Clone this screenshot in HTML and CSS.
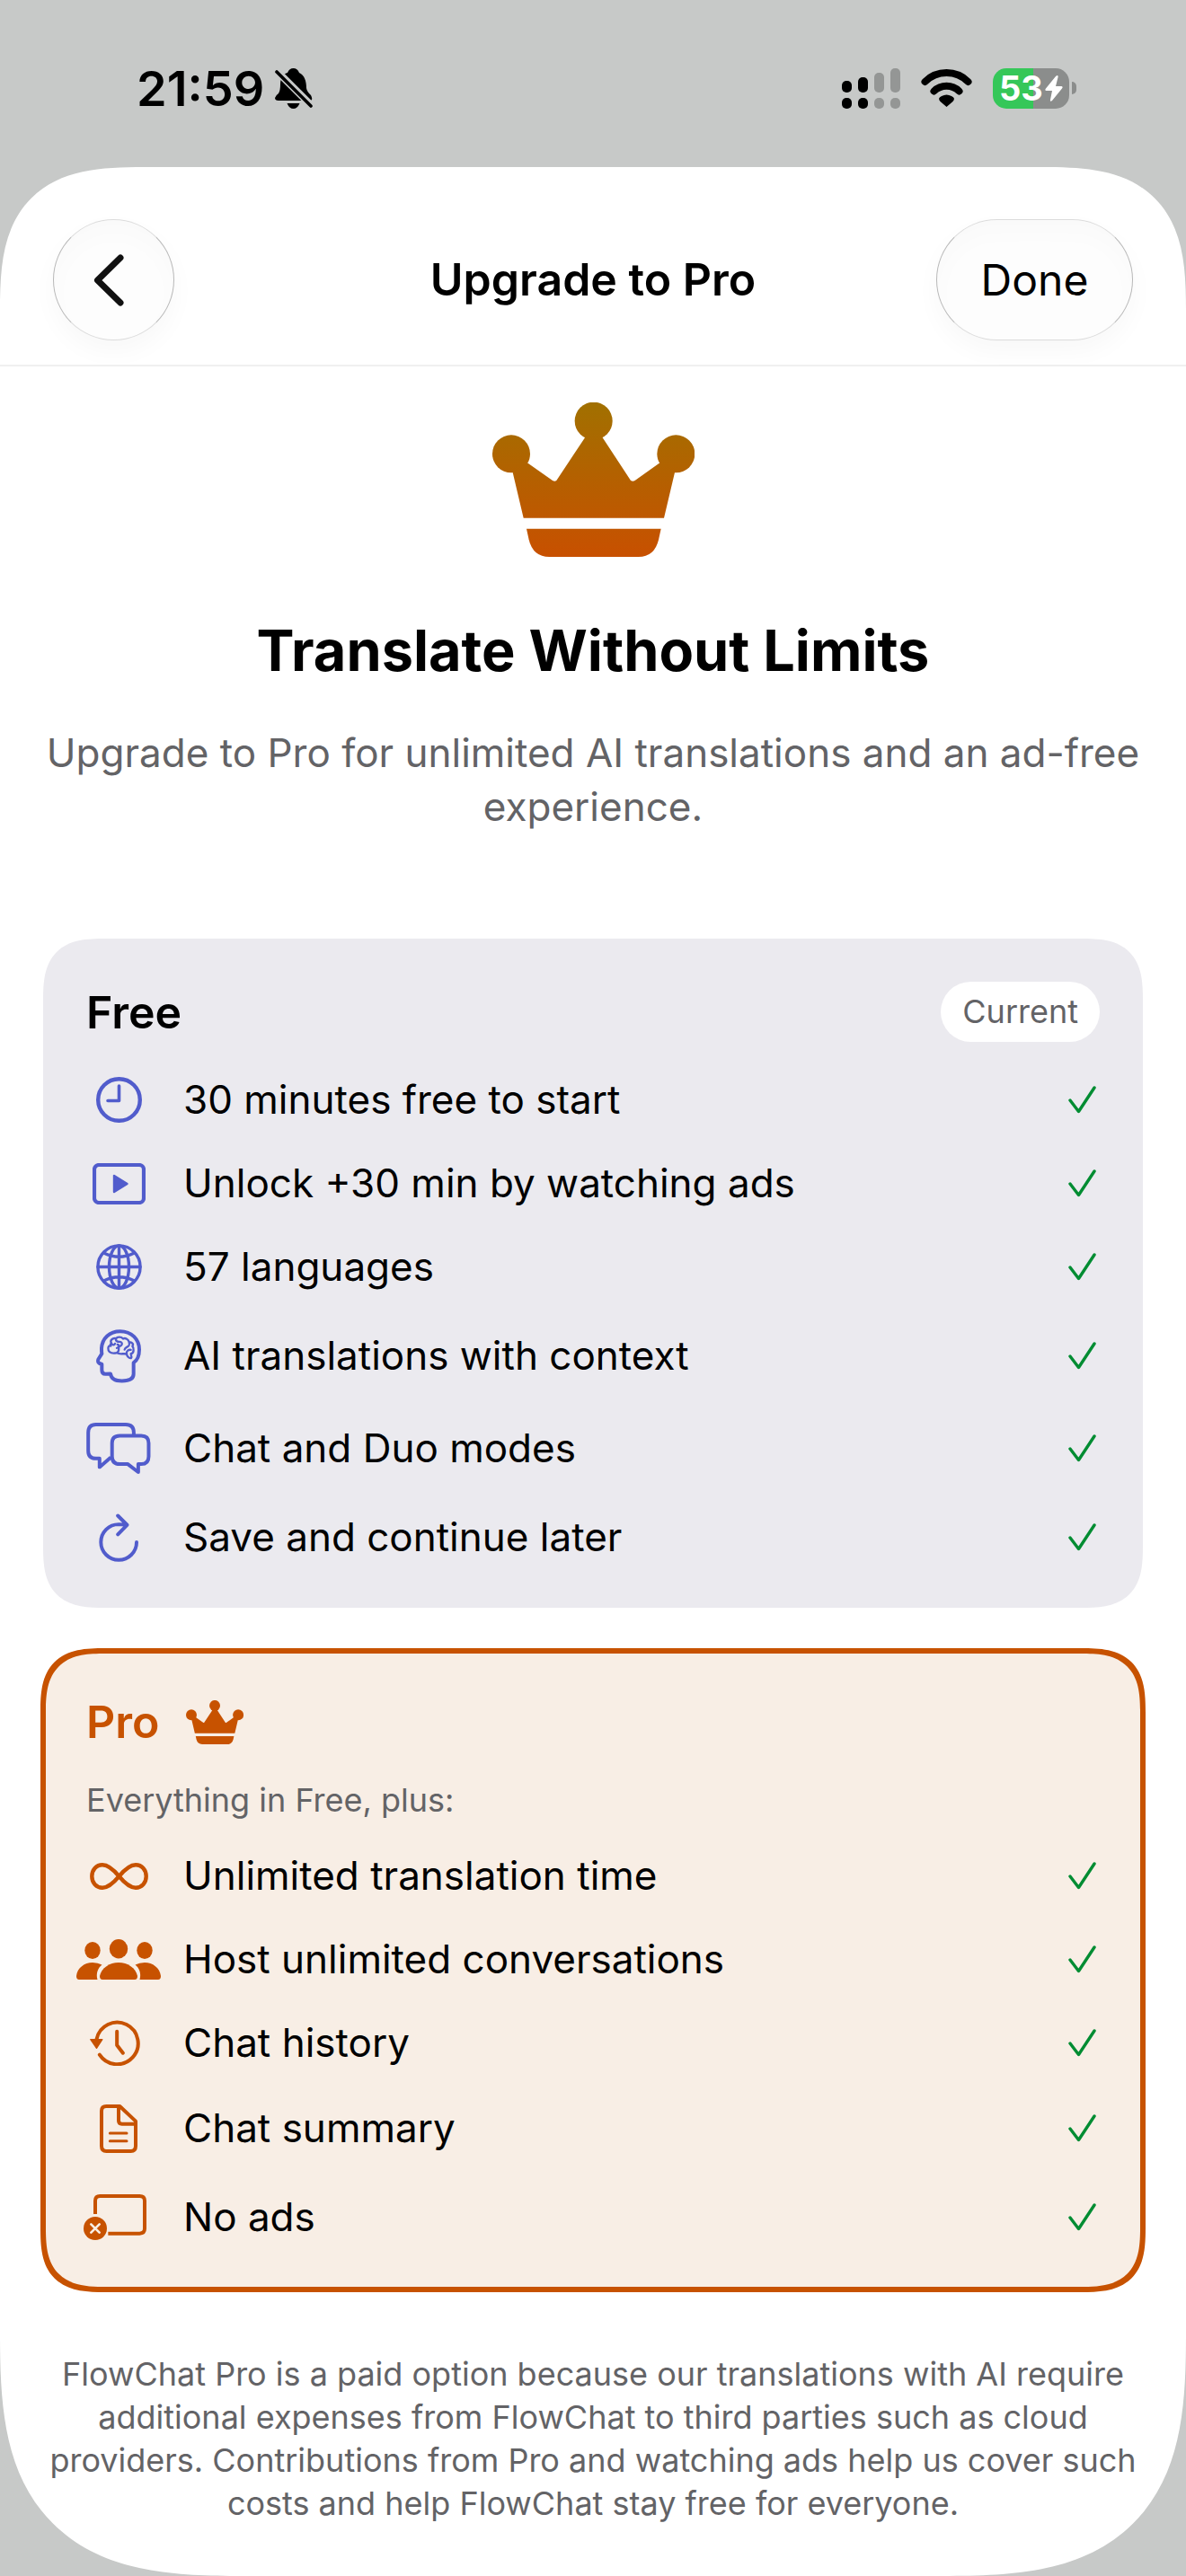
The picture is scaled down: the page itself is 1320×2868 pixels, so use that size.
FILE: index.html
```html
<!DOCTYPE html>
<html lang="en">
<head>
<meta charset="utf-8">
<meta name="viewport" content="width=device-width, initial-scale=1">
<title>Upgrade to Pro</title>
<link rel="stylesheet" href="styles.css">
</head>
<body>
<svg class="defs" width="0" height="0" aria-hidden="true">
  <defs>
    <linearGradient id="gold" gradientUnits="userSpaceOnUse" x1="0" y1="84" x2="0" y2="600">
      <stop offset="0" stop-color="#a17000"/>
      <stop offset="1" stop-color="#c85000"/>
    </linearGradient>
    <symbol id="crown" viewBox="141 84 675 516">
      <circle cx="204" cy="256" r="63"/>
      <circle cx="479" cy="146" r="63"/>
      <circle cx="754" cy="256" r="63"/>
      <path d="M209 318L204 256L260 287L342 345Q349 350 355 345L449 203L479 146L510 203L603 345Q610 350 617 345L698 287L754 256L750 318L714 470H245Z"/>
      <path d="M255 506H704L696 543Q682 600 629 600H331Q277 600 263 543Z"/>
    </symbol>
    <symbol id="check" viewBox="0 0 31 31">
      <path d="M2 16L11.5 28.5L29 2" fill="none" stroke="currentColor" stroke-width="3.4" stroke-linecap="round" stroke-linejoin="round"/>
    </symbol>
  </defs>
</svg>

<div class="status">
  <div class="status-left">
    <span class="time">21:59</span>
    <svg width="42" height="45" viewBox="0 0 42 45" role="img" aria-label="Silent">
      <path d="M20.500 0Q25 0 27 5C33 8 35 14 35 22Q35.500 26 40 30Q43 36 39 36H4Q0 36 0 33Q1 30 4 28Q6 25 6 18C6 10 10 6 14 5Q16 0 20.500 0Z"/>
      <path d="M13.500 39H27.500Q25 45 20.500 45Q16 45 13.500 39Z"/>
      <path d="M0 1L43 44" stroke="#c7c9c8" stroke-width="8"/>
      <path d="M2 4L40 42" stroke="#000" stroke-width="3.600" stroke-linecap="round"/>
    </svg>
  </div>
  <div class="status-right">
    <svg width="65" height="45" viewBox="0 0 65 45" role="img" aria-label="Signal">
      <rect x="0" y="14" width="11" height="13" rx="5"/>
      <rect x="18" y="10" width="11" height="17" rx="5"/>
      <rect x="0" y="33" width="11" height="12" rx="5"/>
      <rect x="18" y="33" width="11" height="12" rx="5"/>
      <g fill="#949695">
        <rect x="36" y="5" width="11" height="22" rx="5"/>
        <rect x="54" y="0" width="11" height="27" rx="5"/>
        <rect x="36" y="33" width="11" height="12" rx="5"/>
        <rect x="54" y="33" width="11" height="12" rx="5"/>
      </g>
    </svg>
    <svg width="57" height="42" viewBox="0 0 57 42" role="img" aria-label="Wi-Fi">
      <path d="M4.500 14A34 34 0 0 1 52.500 14" fill="none" stroke="#000" stroke-width="8" stroke-linecap="round"/>
      <path d="M14.500 24.500A20 20 0 0 1 42.500 24.500" fill="none" stroke="#000" stroke-width="8" stroke-linecap="round"/>
      <path d="M28.500 42L21.500 36Q18 32 23 30Q28.500 27 34 30Q39 32 35.500 36Z"/>
    </svg>
    <div class="battery">
      <div class="battery-body">
        <span>53</span>
        <svg width="20" height="29" viewBox="0 0 20 29" aria-hidden="true"><path fill="#fff" d="M13.500 0Q15 0 14.500 2L12 12H18.500Q20.500 12.500 19 14.500L8 28Q5.500 30 6 27L8 17H1.500Q-.500 16.500 1 14.500L12 1Z"/></svg>
      </div>
      <div class="battery-tip"></div>
    </div>
  </div>
</div>

<main class="sheet">
  <header class="bar">
    <button class="glass back" type="button" aria-label="Back">
      <svg width="34" height="58" viewBox="0 0 34 58"><path d="M30 4L4.500 29L30 54" fill="none" stroke="#111" stroke-width="7" stroke-linecap="round" stroke-linejoin="round"/></svg>
    </button>
    <h1 class="bar-title">Upgrade to Pro</h1>
    <button class="glass done" type="button">Done</button>
  </header>

  <div class="content">
    <section class="hero">
      <svg class="hero-crown" width="225" height="172" aria-hidden="true"><use href="#crown"/></svg>
      <h2 class="hero-title">Translate Without Limits</h2>
      <p class="hero-text">Upgrade to Pro for unlimited AI translations and an ad-free experience.</p>
    </section>

    <section class="card free">
      <div class="card-head">
        <h3 class="card-title">Free</h3>
        <span class="badge">Current</span>
      </div>
      <ul class="features">
        <li class="row">
          <span class="icon"><svg width="51" height="51" viewBox="0 0 51 51"><circle cx="25.500" cy="25.500" r="23.300" stroke-width="4.400"/><path d="M25.500 10V26.500H13" stroke-width="3.600"/></svg></span>
          <span class="label">30 minutes free to start</span>
          <svg class="check" width="31" height="31"><use href="#check"/></svg>
        </li>
        <li class="row">
          <span class="icon"><svg width="59" height="46" viewBox="0 0 59 46"><rect x="2" y="2" width="55" height="42" rx="5" stroke-width="4.200"/><path d="M24 14V32L38.500 23Z" fill="currentColor" stroke-width="2.400"/></svg></span>
          <span class="label">Unlock +30 min by watching ads</span>
          <svg class="check" width="31" height="31"><use href="#check"/></svg>
        </li>
        <li class="row">
          <span class="icon"><svg width="51" height="51" viewBox="0 0 51 51" stroke-width="3.400"><circle cx="25.500" cy="25.500" r="23.600"/><ellipse cx="25.500" cy="25.500" rx="11" ry="23.600"/><path d="M25.500 2V49M2 25.500H49M8.500 10Q25.500 18.500 42.500 10M8.500 41Q25.500 32.500 42.500 41"/></svg></span>
          <span class="label">57 languages</span>
          <svg class="check" width="31" height="31"><use href="#check"/></svg>
        </li>
        <li class="row tall-3">
          <span class="icon"><svg width="50" height="60" viewBox="201 151 150 179">
            <path stroke-width="12" d="M249 299L232 300Q220 300 220 286V267Q204 264 208 251L220 232Q219 226 219 214C221 180 246 157 281 157C320 157 345 185 345 218C345 238 337 255 326 262V300Q326 323 287 323Q252 323 249 299Z"/>
            <path stroke-width="7" d="M250 206C238 203 240 222 246 226C252 231 262 231 270 229C280 236 292 230 303 233C304 240 310 248 317 247C322 244 317 238 317 232C328 231 328 212 322 207C328 198 318 192 311 194C310 184 298 178 291 182C284 174 271 176 268 181C255 178 246 188 252 197C247 200 248 204 250 206M252 197C257 206 263 203 264 198M268 181C264 190 274 193 280 192M272 201C281 201 274 213 270 213M280 192C292 194 288 206 277 208M277 208C275 218 280 224 270 229M311 194C316 212 299 206 296 218M303 233C301 222 310 218 317 219"/>
          </svg></span>
          <span class="label">AI translations with context</span>
          <svg class="check" width="31" height="31"><use href="#check"/></svg>
        </li>
        <li class="row tall-2">
          <span class="icon"><svg width="72" height="57" viewBox="168 461 216 172" stroke-width="12">
            <path stroke-linecap="butt" d="M327 500V494Q327 467 300 467H200Q174 467 174 494V555Q174 581 200 581H212V610L250 577"/>
            <path d="M280 505H352Q377 505 377 530V574Q377 600 352 600H342V627L307 600H280Q254 600 254 574V530Q254 505 280 505Z"/>
          </svg></span>
          <span class="label">Chat and Duo modes</span>
          <svg class="check" width="31" height="31"><use href="#check"/></svg>
        </li>
        <li class="row tall-1">
          <span class="icon"><svg width="44" height="54" viewBox="209 765 133 162" stroke-width="12"><path d="M336 861A60 60 0 1 1 276 801L303 803M273 772L304 803L273 835"/></svg></span>
          <span class="label">Save and continue later</span>
          <svg class="check" width="31" height="31"><use href="#check"/></svg>
        </li>
      </ul>
    </section>

    <section class="card pro">
      <div class="card-head">
        <h3 class="card-title">Pro</h3>
        <svg class="small-crown" width="64" height="49" aria-hidden="true"><use href="#crown"/></svg>
      </div>
      <p class="note">Everything in Free, plus:</p>
      <ul class="features">
        <li class="row">
          <span class="icon"><svg width="65" height="30" viewBox="0 0 65 30"><path stroke-width="4.400" d="M32.500 15C25 6 20 2.300 14 2.300C7 2.300 2.300 8 2.300 15S7 27.700 14 27.700C20 27.700 25 24 32.500 15C40 6 45 2.300 51 2.300C58 2.300 62.700 8 62.700 15S58 27.700 51 27.700C45 27.700 40 24 32.500 15Z"/></svg></span>
          <span class="label">Unlimited translation time</span>
          <svg class="check" width="31" height="31"><use href="#check"/></svg>
        </li>
        <li class="row">
          <span class="icon"><svg class="solid" width="94" height="45" viewBox="0 0 94 45">
            <ellipse cx="18" cy="12.500" rx="8.700" ry="9.500"/><ellipse cx="47" cy="10.700" rx="10.200" ry="10.700"/><ellipse cx="76" cy="12.500" rx="8.700" ry="9.500"/>
            <path d="M3 45Q0 45 0 41C1 32 9 26 18 26Q24 26 28.500 28.500C24 32 21.500 38 23.500 45Z"/>
            <path d="M91 45Q94 45 94 41C93 32 85 26 76 26Q70 26 65.500 28.500C70 32 72.500 38 70.500 45Z"/>
            <path d="M29 45Q26 45 26 41C28 32 37 26 47 26C57 26 66 32 68 41Q68 45 65 45Z"/>
          </svg></span>
          <span class="label">Host unlimited conversations</span>
          <svg class="check" width="31" height="31"><use href="#check"/></svg>
        </li>
        <li class="row">
          <span class="icon wide-left"><svg width="56" height="51" viewBox="185 150 167 153"><path stroke-width="12" d="M207 214A70 70 0 1 1 217 266"/><path stroke-width="12" d="M275 188V234L295 260"/><path stroke-width="4" fill="currentColor" d="M187 215H226L207 244Z"/></svg></span>
          <span class="label">Chat history</span>
          <svg class="check" width="31" height="31"><use href="#check"/></svg>
        </li>
        <li class="row tall-1">
          <span class="icon"><svg width="42" height="54" viewBox="213 436 126 162"><path stroke-width="12" d="M235 442H280L333 492V575Q333 592 317 592H235Q219 592 219 575V458Q219 442 235 442ZM276 446V490Q276 501 287 501H330"/><path stroke-width="9" d="M247 532H303M247 558H303"/></svg></span>
          <span class="label">Chat summary</span>
          <svg class="check" width="31" height="31"><use href="#check"/></svg>
        </li>
        <li class="row tall-2">
          <span class="icon wide-left"><svg width="70" height="51" viewBox="156 729 210 153"><path stroke-width="12" stroke-linecap="butt" d="M195 795V751Q195 735 211 735H343Q360 735 360 751V844Q360 860 343 860H238"/><circle cx="195" cy="843" r="39" fill="currentColor" stroke="none"/><path stroke="#f8eee5" stroke-width="8" d="M181 829L209 857M209 829L181 857"/></svg></span>
          <span class="label">No ads</span>
          <svg class="check" width="31" height="31"><use href="#check"/></svg>
        </li>
      </ul>
    </section>

    <p class="disclaimer">FlowChat Pro is a paid option because our translations with AI require additional expenses from FlowChat to third parties such as cloud providers. Contributions from Pro and watching ads help us cover such costs and help FlowChat stay free for everyone.</p>
  </div>
</main>
</body>
</html>
```

FILE: styles.css
```css
* {
  box-sizing: border-box;
}

body {
  margin: 0;
  min-height: 100vh;
  display: flex;
  flex-direction: column;
  background: #c7c9c8;
  color: #000;
  font-family: Inter, "Liberation Sans", sans-serif;
  font-size: 44px;
  line-height: 57px;
}

h1, h2, h3, p, ul {
  margin: 0;
  padding: 0;
}

/* Shared symbols: kept out of the flow, yet rendered so the gradient works */
.defs {
  position: absolute;
}

/* Status bar */
.status {
  display: flex;
  justify-content: space-between;
  padding: 62px 122px 52px 152px;
}

.status-left,
.status-right {
  display: flex;
  align-items: center;
  height: 72px;
}

.status-left {
  gap: 12px;
}

.status-right {
  gap: 23px;
}

.time {
  font-size: 54px;
  font-weight: 600;
}

.battery {
  display: flex;
  align-items: center;
  gap: 3px;
}

.battery-body {
  display: flex;
  align-items: center;
  justify-content: center;
  gap: 2px;
  width: 85px;
  height: 45px;
  border-radius: 15px;
  background: linear-gradient(to right, #35c759 53%, #8b8d8c 53%);
  color: #fff;
  font-size: 38px;
  font-weight: 700;
  line-height: 45px;
}

.battery-tip {
  width: 5px;
  height: 14px;
  border-radius: 0 5px 5px 0;
  background: #8b8d8c;
}

/* Sheet */
.sheet {
  flex: 1;
  background: #fff;
  border-radius: 120px 120px 188px 188px;
}

.bar {
  display: grid;
  grid-template-columns: 1fr auto 1fr;
  align-items: center;
  padding: 58px 59px 27px;
  border-bottom: 2px solid #f0f0f0;
}

.bar-title {
  font-size: 50px;
  font-weight: 600;
}

.glass {
  display: flex;
  align-items: center;
  justify-content: center;
  height: 135px;
  padding: 0;
  border: 1px solid #b8b8b8;
  border-top-color: #dcdcdc;
  border-bottom-color: #dcdcdc;
  border-radius: 68px;
  background: #fdfdfd;
  box-shadow: 0 12px 28px rgba(0, 0, 0, 0.03), inset 0 14px 28px rgba(0, 0, 0, 0.015);
  color: #000;
  font: inherit;
  font-size: 48px;
}

.back {
  width: 135px;
  padding-right: 11px;
}

.done {
  justify-self: end;
  width: 219px;
}

.content {
  padding: 40px 48px 44px;
}

/* Hero */
.hero {
  display: flex;
  flex-direction: column;
  align-items: center;
  margin-bottom: 117px;
  text-align: center;
}

.hero-crown {
  fill: url(#gold);
}

.hero-title {
  margin: 64px 0 44px;
  font-size: 63px;
  font-weight: 700;
  line-height: 80px;
}

.hero-text {
  color: #636366;
  line-height: 60px;
}

/* Plan cards */
.card {
  display: flex;
  flex-direction: column;
  gap: 36px;
  padding: 48px;
  border-radius: 54px;
}

.free {
  background: #ebeaef;
}

.pro {
  margin-top: 48px;
  background: #f8eee5;
  outline: 6px solid #c75200;
  outline-offset: -3px;
}

.card-head {
  display: flex;
  align-items: center;
}

.free .card-head {
  justify-content: space-between;
}

.pro .card-head {
  gap: 30px;
  color: #c75200;
}

.card-title {
  font-size: 50px;
  font-weight: 600;
  line-height: 62px;
}

.small-crown {
  fill: currentColor;
}

.badge {
  padding: 0 24px;
  border-radius: 34px;
  background: #fff;
  color: #636366;
  font-size: 36px;
  line-height: 67px;
}

.note {
  color: #636366;
  font-size: 36px;
  line-height: 40px;
}

.features {
  display: flex;
  flex-direction: column;
  gap: 36px;
  list-style: none;
}

.row {
  display: flex;
  align-items: center;
  gap: 36px;
  min-height: 57px;
}

.tall-1 {
  min-height: 61px;
}

.tall-2 {
  min-height: 65px;
}

.tall-3 {
  min-height: 69px;
}

.icon {
  display: flex;
  flex: none;
  align-items: center;
  justify-content: center;
  width: 72px;
  height: 57px;
  color: #515ccc;
}

.icon svg {
  flex: none;
  fill: none;
  stroke: currentColor;
  stroke-linecap: round;
  stroke-linejoin: round;
}

.icon .solid {
  fill: currentColor;
  stroke: none;
}

.pro .icon {
  color: #c75200;
}

.wide-left {
  padding-right: 8px;
}

.label {
  flex: 1;
}

.check {
  flex: none;
  margin-right: 4px;
  color: #008c32;
}

.disclaimer {
  margin-top: 70px;
  color: #636366;
  font-size: 36px;
  line-height: 48px;
  text-align: center;
}

/* Continuous corners where the browser can draw them */
@supports (corner-shape: superellipse(1.5)) {
  .sheet,
  .card {
    corner-shape: superellipse(1.5);
  }

  .sheet {
    border-radius: 160px 160px 270px 270px;
  }

  .card {
    border-radius: 69px;
  }
}
```
